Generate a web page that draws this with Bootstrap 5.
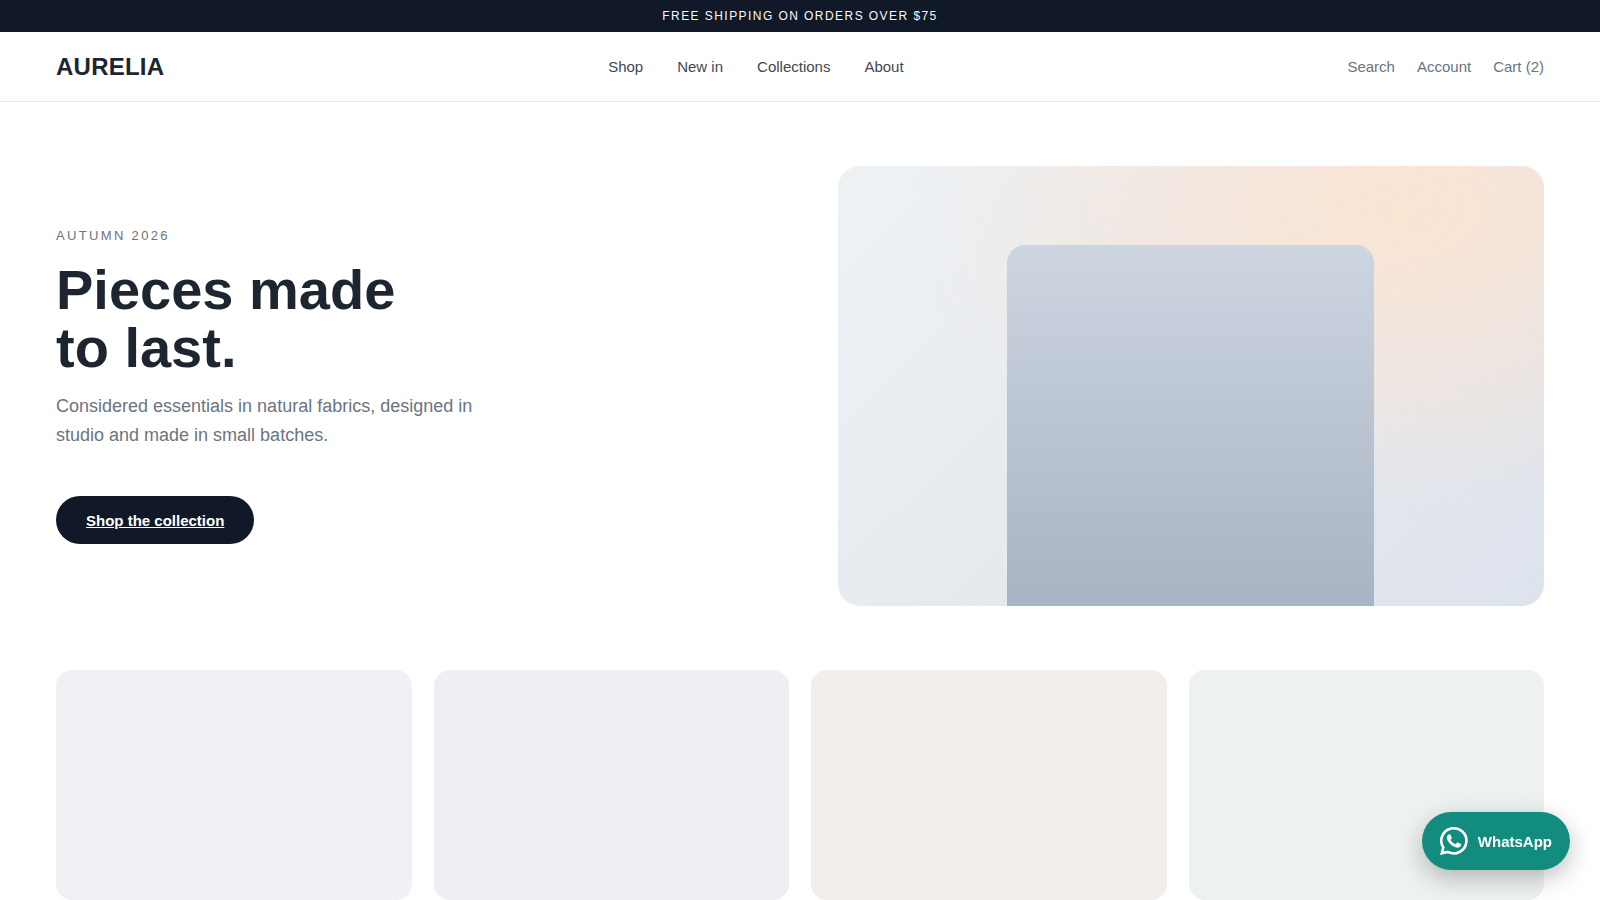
<!DOCTYPE html>
<html lang="en">
<head>
<meta charset="utf-8">
<meta name="viewport" content="width=device-width, initial-scale=1">
<title>Aurelia</title>
<link href="https://cdn.jsdelivr.net/npm/bootstrap@5.3.0/dist/css/bootstrap.min.css" rel="stylesheet">
<style>
  body { font-family: "Liberation Sans", Arial, sans-serif; font-size: 15px; color: #1f2937; background: #fff; }
  .promo { background: #111827; color: #f9fafb; font-size: 12px; line-height: 16px; letter-spacing: .12em; }
  .gutter { padding-left: 56px; padding-right: 56px; }
  .site-header { min-height: 70px; border-bottom: 1px solid #e9eaec; }
  .brand-name { font-size: 24px; letter-spacing: .01em; color: #1c2530; }
  .main-links, .tool-links, .chat-label { padding-top: 2px; }
  .main-links { gap: 34px; }
  .main-links a { color: #3f4752; }
  .tool-links { gap: 22px; }
  .tool-links a { color: #6b7480; }
  .hero { display: grid; grid-template-columns: 1.05fr 1fr; gap: 40px; padding-top: 64px; padding-bottom: 64px; }
  .eyebrow { font-size: 13px; line-height: 15px; letter-spacing: .18em; color: #6b7480; margin-bottom: 18px; }
  .hero h1 { font-size: 56px; line-height: 58px; color: #1c2530; margin-bottom: 15px; }
  .intro { font-size: 18px; line-height: 29px; color: #6b7480; max-width: 440px; margin-bottom: 46px; }
  .cta { background: #111827; color: #fff; font-size: 15px; line-height: 18px; padding: 16px 30px 14px; }
  .cta:hover { background: #1f2937; color: #fff; }
  .artwork { height: 440px; border-radius: 22px;
    background: radial-gradient(120% 120% at 80% 10%, #fbe5d3 0, transparent 58%), linear-gradient(135deg, #eef2f5, #e6e9ee 50%, #dde3ed); }
  .figure-block { width: 52%; height: 82%; border-radius: 18px 18px 0 0; background: linear-gradient(#cdd5e0, #a8b4c3); }
  .tiles { display: grid; grid-template-columns: repeat(4, 1fr); gap: 22px; }
  .tile { height: 230px; border-radius: 16px; }
  .tile-mist { background: #f0f1f5; }
  .tile-lilac { background: #eeeff3; }
  .tile-sand { background: #f2eee9; }
  .tile-sage { background: #edf1f0; }
  .chat { right: 30px; bottom: 30px; height: 58px; padding: 0 18px; gap: 10px; background: #128c7e; color: #fff; font-size: 15px; box-shadow: 0 8px 24px rgba(0, 0, 0, .25); z-index: 10; }
</style>
</head>
<body>
<div class="promo text-center py-2">FREE SHIPPING ON ORDERS OVER $75</div>
<header class="site-header gutter d-flex align-items-center justify-content-between">
  <a href="#" class="brand-name fw-bold text-decoration-none">AURELIA</a>
  <nav class="main-links d-flex" aria-label="Main">
    <a href="#" class="text-decoration-none">Shop</a>
    <a href="#" class="text-decoration-none">New in</a>
    <a href="#" class="text-decoration-none">Collections</a>
    <a href="#" class="text-decoration-none">About</a>
  </nav>
  <div class="tool-links d-flex">
    <a href="#" class="text-decoration-none">Search</a>
    <a href="#" class="text-decoration-none">Account</a>
    <a href="#" class="text-decoration-none">Cart (2)</a>
  </div>
</header>
<main>
  <section class="hero gutter align-items-center">
    <div>
      <div class="eyebrow">AUTUMN 2026</div>
      <h1 class="fw-bold">Pieces made<br>to last.</h1>
      <p class="intro">Considered essentials in natural fabrics, designed in studio and made in small batches.</p>
      <a href="#collection" class="cta d-inline-block rounded-pill fw-bold align-top">Shop the collection</a>
    </div>
    <div class="artwork d-flex align-items-end justify-content-center overflow-hidden">
      <div class="figure-block"></div>
    </div>
  </section>
  <section id="collection" class="tiles gutter">
    <div class="tile tile-mist"></div>
    <div class="tile tile-lilac"></div>
    <div class="tile tile-sand"></div>
    <div class="tile tile-sage"></div>
  </section>
</main>
<a href="#chat" class="chat position-fixed d-flex align-items-center rounded-pill fw-bold text-decoration-none">
  <svg width="28" height="28" viewBox="0 0 16 16" fill="currentColor" aria-hidden="true">
    <path fill="none" stroke="currentColor" stroke-width="1.5" d="M1.05 14.95 1.9 11.8A7.18 7.18 0 1 1 4.5 14.2Z"/>
    <path stroke="currentColor" stroke-width=".15" d="M11.609 9.587c-.197-.099-1.17-.578-1.353-.646-.182-.065-.315-.099-.445.099-.133.197-.513.646-.627.775-.114.133-.232.148-.43.05-.197-.1-.836-.308-1.592-.985-.59-.525-.985-1.175-1.103-1.372-.114-.198-.011-.304.088-.403.087-.088.197-.232.296-.346.1-.114.133-.198.198-.33.065-.134.034-.248-.015-.347-.05-.099-.445-1.076-.612-1.47-.16-.389-.323-.335-.445-.34-.114-.007-.247-.007-.38-.007a.73.73 0 0 0-.529.247c-.182.198-.691.677-.691 1.654s.71 1.916.81 2.049c.098.133 1.394 2.132 3.383 2.992.47.205.84.326 1.129.418.475.152.904.129 1.246.08.38-.058 1.171-.48 1.338-.943.164-.464.164-.86.114-.992-.049-.133-.182-.217-.38-.316"/>
  </svg>
  <span class="chat-label">WhatsApp</span>
</a>
<script src="https://cdn.jsdelivr.net/npm/bootstrap@5.3.0/dist/js/bootstrap.bundle.min.js"></script>
</body>
</html>
